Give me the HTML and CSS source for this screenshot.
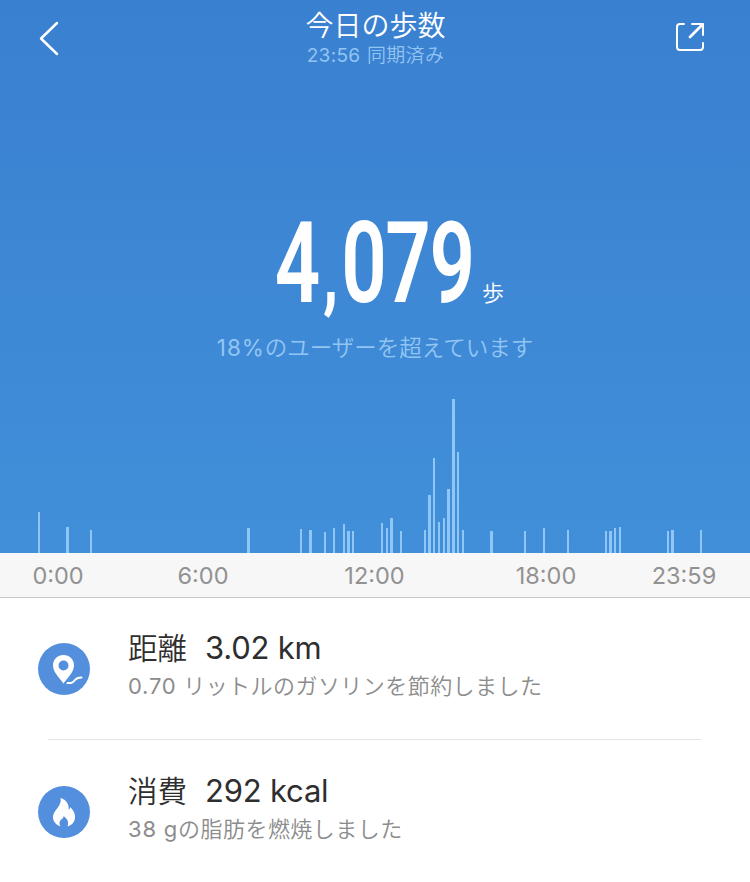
FILE: index.html
```html
<!DOCTYPE html>
<html lang="ja">
<head>
    <meta charset="UTF-8">
    <meta name="viewport" content="width=device-width, initial-scale=1.0">
    <title>今日の歩数</title>
    <link rel="stylesheet" href="styles.css">
</head>
<body>
    <div class="summary">
        <header class="header">
            <svg class="back" width="24" height="40" viewBox="0 0 24 40">
                <path d="M20 5L4 20.500L20 36"/>
            </svg>
            <div class="heading">
                <h1>今日の歩数</h1>
                <p class="sync"><span>23:56</span> 同期済み</p>
            </div>
            <svg class="share" width="32" height="32" viewBox="0 0 32 32">
                <path d="M9 3H5a3 3 0 0 0-3 3V26a3 3 0 0 0 3 3H25a3 3 0 0 0 3-3V22M17 3H28V14"/>
                <path class="arrow" d="M27.500 3.500L15 16"/>
            </svg>
        </header>

        <div class="steps">
            <svg class="count" width="206" height="130" viewBox="0 0 206 130">
                <text transform="scale(.7 1)" x="1 70 96 159 222" y="92">4<tspan class="comma">,</tspan>079</text>
            </svg>
            <span class="unit">歩</span>
        </div>
        <p class="rank"><span>18%</span>のユーザーを超えています</p>

        <svg class="chart" width="750" height="160" viewBox="0 0 750 160"></svg>
    </div>

    <div class="axis">
        <span>0:00</span>
        <span>6:00</span>
        <span>12:00</span>
        <span>18:00</span>
        <span>23:59</span>
    </div>

    <div class="details">
        <div class="item">
            <svg class="icon" width="52" height="52" viewBox="0 0 52 52">
                <circle cx="26" cy="26" r="26"/>
                <path class="shape" fill-rule="evenodd" d="M25.500 12C19.300 12 15 16.500 15 22.200C15 29 20.500 33.500 25.500 40.500C30.500 33.500 36 29 36 22.200C36 16.500 31.700 12 25.500 12ZM25.500 17.500a5 5 0 1 1 0 10a5 5 0 0 1 0-10Z"/>
                <path class="road" d="M29.500 40C34 40.500 35 39.500 36.500 37.500S40 34.500 43.500 34.500"/>
            </svg>
            <div class="text">
                <h2>距離<span>3.02 km</span></h2>
                <p><span>0.70</span> リットルのガソリンを節約しました</p>
            </div>
        </div>
        <div class="item">
            <svg class="icon" width="52" height="52" viewBox="0 0 52 52">
                <circle cx="26" cy="26" r="26"/>
                <path class="shape" d="M22.500 12C28.500 14 31 18 30.700 23.500C31.800 23 32.300 22 32.400 21C35.500 24.500 37.500 28 37 32C36.500 36.500 33.500 39.500 29.500 40.300C31 37 30 33 25.500 30C26 33 21.500 33 21.500 37C21.500 38.500 22 39.500 22.700 40.300C18 39 15 35.500 15 31C15 24 24.500 20 22.500 12Z"/>
            </svg>
            <div class="text">
                <h2>消費<span>292 kcal</span></h2>
                <p><span>38 g</span>の脂肪を燃焼しました</p>
            </div>
        </div>
    </div>

    <script src="chart.js"></script>
</body>
</html>
```
FILE: styles.css
```css
* {
    box-sizing: border-box;
}
body {
    margin: 0;
    font-family: Inter, 'Noto Sans CJK JP', sans-serif;
    font-weight: 350;
    background: #fff;
    color: #2e2e2e;
}
h1, h2, p {
    margin: 0;
    font-weight: inherit;
}
.summary {
    display: flex;
    flex-direction: column;
    height: 553px;
    background: linear-gradient(#3a80d0, #418fd9);
    color: #fff;
}
.header {
    display: flex;
    justify-content: space-between;
    height: 76px;
    padding: 0 43px 0 37px;
}
.header svg {
    fill: none;
    stroke: #fff;
    stroke-width: 2.5;
    stroke-linecap: round;
    stroke-linejoin: round;
}
.back {
    margin-top: 18px;
}
.share {
    margin-top: 21px;
}
.header .share {
    stroke-width: 2;
}
.share .arrow {
    stroke-width: 2.8;
}
.heading {
    padding: 6px 0 0 15px;
    text-align: center;
}
.heading h1 {
    font-size: 28px;
    line-height: 40px;
}
.sync {
    font-size: 19px;
    line-height: 20px;
    letter-spacing: 0.3px;
    color: #93c5f3;
}
.sync span {
    margin-right: 1px;
    font-weight: 400;
}
.steps {
    display: flex;
    align-items: flex-start;
    height: 130px;
    margin: 134px 0 0 274px;
}
.count {
    flex: none;
}
.count text {
    font-family: Roboto, sans-serif;
    font-size: 114px;
    font-weight: 600;
    fill: #fff;
}
.count .comma {
    font-size: 88px;
    font-weight: 700;
}
.unit {
    margin: 68px 0 0 2px;
    font-size: 22px;
    line-height: 30px;
}
.rank {
    margin-top: -7px;
    font-size: 22.5px;
    line-height: 30px;
    text-align: center;
    color: #93c5f3;
}
.rank span {
    font-weight: 400;
    letter-spacing: 0.9px;
}
.chart {
    margin-top: auto;
    fill: #8fc6f6;
}
.axis {
    display: grid;
    grid-template-columns: 116px 174px 169px 174px 102px;
    height: 45px;
    border-bottom: 1px solid #c8c8c8;
    background: #f7f7f7;
    font-size: 23.5px;
    font-weight: 400;
    line-height: 46px;
    text-align: center;
    color: #929292;
}
.item {
    display: flex;
    align-items: center;
    gap: 38px;
    height: 142px;
    padding-left: 38px;
}
.item + .item {
    position: relative;
    height: 144px;
}
.item + .item::before {
    content: '';
    position: absolute;
    top: -1px;
    left: 48px;
    right: 49px;
    height: 1px;
    background: #e6e6e6;
}
.icon {
    fill: #548fdd;
}
.icon .shape {
    fill: #fff;
}
.icon .road {
    fill: none;
    stroke: #fff;
    stroke-width: 2;
    stroke-linecap: round;
}
.text {
    padding-bottom: 8px;
}
.text h2 {
    font-size: 29.5px;
    line-height: 42px;
}
.text h2 span {
    margin-left: 18px;
    font-size: 31px;
    font-weight: 400;
    letter-spacing: -0.2px;
}
.text p {
    font-size: 22px;
    line-height: 34px;
    letter-spacing: 0.45px;
    color: #8c8c8c;
}
.text p span {
    font-weight: 400;
    letter-spacing: 0.8px;
}
```
FILE: chart.js
```javascript
// [x, width, height] of every bar
const bars = [
    [38, 2, 41], [66, 3, 26], [90, 2, 23], [247, 3, 25],
    [300, 2, 24], [309, 3, 23], [324, 2, 21], [333, 2, 25],
    [343, 2, 29], [347, 3, 22], [352, 2, 22], [381, 2, 30],
    [386, 2, 25], [390, 3, 35], [400, 2, 22], [424, 2, 23],
    [428, 3, 58], [433, 2, 95], [438, 2, 31], [443, 2, 35],
    [447, 3, 64], [452, 3, 154], [457, 2, 101], [462, 2, 23],
    [490, 3, 22], [524, 2, 22], [543, 2, 25], [567, 2, 23],
    [605, 2, 22], [609, 3, 22], [614, 2, 25], [619, 2, 26],
    [667, 2, 22], [671, 3, 23], [700, 2, 23]
];

const chart = document.querySelector('.chart');
bars.forEach(([x, width, height]) => {
    const rect = document.createElementNS('http://www.w3.org/2000/svg', 'rect');
    rect.setAttribute('x', x);
    rect.setAttribute('y', 160 - height);
    rect.setAttribute('width', width);
    rect.setAttribute('height', height);
    chart.appendChild(rect);
});
```
